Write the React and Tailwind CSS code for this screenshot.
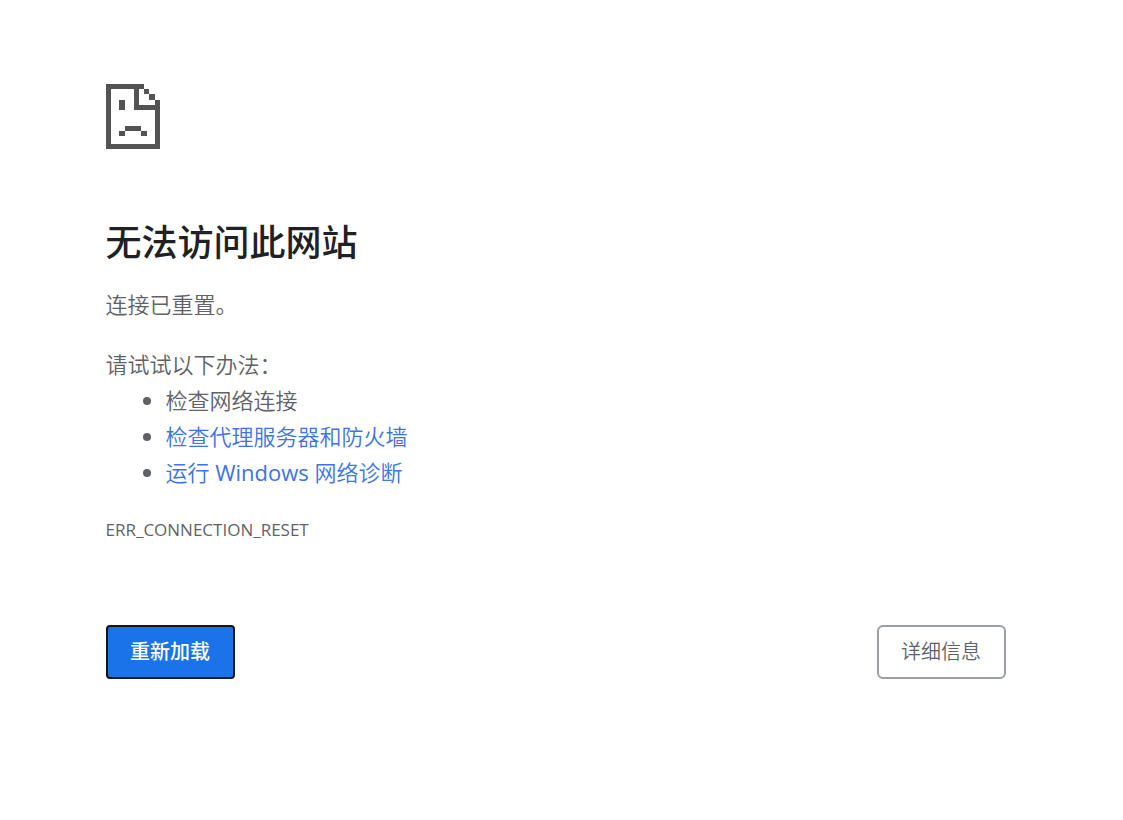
function SadPageIcon() {
  return (
    <svg width="54" height="65" viewBox="0 0 54 65" fill="#535353" shapeRendering="crispEdges" aria-hidden="true">
      <path d="M0 0H38V5H33V21H49V16H54V65H0ZM5 5V60H49V26H28V5Z" fillRule="evenodd" />
      <path d="M38 5h5v5h-5zM43 10h6v6h-6zM13 16h6v10h-6zM19 42h16v5H19zM13 47h6v5h-6zM35 47h6v5h-6z" />
    </svg>
  );
}

export default function App() {
  return (
    <div className="pr-3">
      <main
        lang="zh-CN"
        className="mx-auto max-w-[900px] pt-[84px] pb-16 font-['Open_Sans','Noto_Sans_CJK_SC',sans-serif] text-[22px] leading-9 font-[350] text-[#5f6368]"
      >
        <SadPageIcon />
        <h1 className="mt-[69px] font-['Noto_Sans_CJK_SC',sans-serif] text-4xl leading-[44px] font-medium text-[#202124]">
          无法访问此网站
        </h1>
        <p className="mt-6">连接已重置。</p>
        <p className="mt-6">请试试以下办法：</p>
        <ul className="list-disc pl-[60px]">
          <li>检查网络连接</li>
          <li>
            <a href="#proxy" className="text-[#4072e8]">检查代理服务器和防火墙</a>
          </li>
          <li>
            <a href="#diagnose" className="text-[#4072e8]">
              运行 <span className="font-normal">Windows</span> 网络诊断
            </a>
          </li>
        </ul>
        <p className="mt-6 text-[17px] leading-8 font-normal">ERR_CONNECTION_RESET</p>
        <div className="mt-[79px] flex items-center justify-between text-xl leading-6">
          <button type="button" className="h-[54px] w-[129px] rounded border-2 border-[#101518] bg-[#1a73e8] font-medium text-white">
            重新加载
          </button>
          <button type="button" className="h-[54px] w-[129px] rounded-md border-2 border-[#9aa0a6]">
            详细信息
          </button>
        </div>
      </main>
    </div>
  );
}
